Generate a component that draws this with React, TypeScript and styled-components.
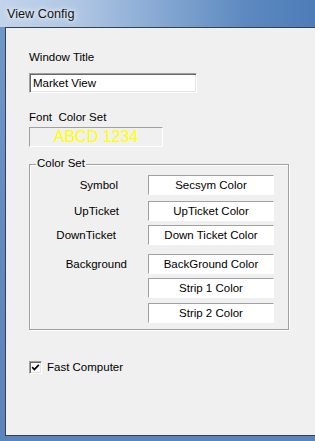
import React from 'react';
import styled, { createGlobalStyle } from 'styled-components';

const Global = createGlobalStyle`
  html, body { margin: 0; padding: 0; background: #6890c3; }
  body { font-family: "Liberation Sans", Arial, sans-serif; }
`;

const Frame = styled.div`
  width: 315px;
  height: 441px;
  box-sizing: border-box;
  display: flex;
  flex-direction: column;
  padding: 0 0 5px 5px;
  background: linear-gradient(180deg, #7199cb 0%, #5f89bf 60%, #5a84bb 100%);
  overflow: hidden;
`;

const TitleBar = styled.div`
  height: 27px;
  flex: none;
  margin-left: -5px;
  padding-left: 7px;
  display: flex;
  align-items: center;
  background: linear-gradient(90deg, #c2d4ea 0%, #afc6e3 25%, #87a9d3 50%, #5d89c0 78%, #4d7cb7 100%);
  font-size: 12.7px;
  color: #141414;
  text-shadow: 0 0 4px #fff, 0 0 8px rgba(255, 255, 255, 0.8);
`;

const Client = styled.div`
  flex: 1;
  background: #f0f0f0;
  border: 1px solid #34414f;
  border-right: none;
  display: flex;
  flex-direction: column;
  align-items: flex-start;
  padding: 22px 0 0 23px;
  font-size: 11.5px;
  color: #000;
`;

const Label = styled.div<{ $top: number }>`
  line-height: 14px;
  height: 14px;
  margin-top: ${(p) => p.$top}px;
  white-space: nowrap;
`;

const TextBox = styled.div`
  margin-top: 9px;
  width: 168px;
  height: 20px;
  box-sizing: border-box;
  background: #fff;
  border: 1px solid;
  border-color: #a0a0a0 #fff #fff #a0a0a0;
  box-shadow: inset 1px 1px 0 #696969, inset -1px -1px 0 #e3e3e3;
  padding-left: 3px;
  line-height: 18px;
  white-space: nowrap;
`;

const Preview = styled.div`
  margin-top: 3px;
  width: 134px;
  height: 20px;
  box-sizing: border-box;
  border: 1px solid;
  border-color: #a0a0a0 #fff #fff #a0a0a0;
  color: #ffff00;
  font-size: 16px;
  line-height: 18px;
  text-align: center;
  white-space: nowrap;
`;

const Group = styled.div`
  position: relative;
  margin-top: 17px;
  width: 260px;
  height: 166px;
  box-sizing: border-box;
  border: 1px solid #a0a0a0;
  box-shadow: inset 1px 1px 0 #fff, 1px 1px 0 #fff;
  display: flex;
  flex-direction: column;
  padding-top: 10px;
`;

const Legend = styled.div`
  position: absolute;
  top: -9px;
  left: 6px;
  padding: 0 1px;
  background: #f0f0f0;
  line-height: 14px;
  white-space: nowrap;
`;

const Row = styled.div<{ $gap: number }>`
  display: grid;
  grid-template-columns: 118px 126px;
  align-items: center;
  height: 20px;
  margin-top: ${(p) => p.$gap}px;
`;

const RowLabel = styled.div<{ $pad: number }>`
  text-align: right;
  padding-right: ${(p) => p.$pad}px;
  line-height: 14px;
  white-space: nowrap;
`;

const ColorButton = styled.div`
  height: 20px;
  box-sizing: border-box;
  background: #fff;
  border: 1px solid;
  border-color: #a0a0a0 #fff #fff #a0a0a0;
  text-align: center;
  line-height: 18px;
  white-space: nowrap;
`;

const CheckRow = styled.div`
  margin-top: 30px;
  display: flex;
  align-items: center;
  gap: 5px;
  line-height: 14px;
`;

const CheckBox = styled.div`
  width: 13px;
  height: 13px;
  box-sizing: border-box;
  background: #fff;
  border: 1px solid;
  border-color: #a0a0a0 #fff #fff #a0a0a0;
  box-shadow: inset 1px 1px 0 #696969, inset -1px -1px 0 #e3e3e3;
  display: flex;
  align-items: center;
  justify-content: center;
`;

const rows = [
  { label: 'Symbol', pad: 30, btn: 'Secsym Color', gap: 0 },
  { label: 'UpTicket', pad: 29, btn: 'UpTicket Color', gap: 6 },
  { label: 'DownTicket', pad: 32, btn: 'Down Ticket Color', gap: 4 },
  { label: 'Background', pad: 21, btn: 'BackGround Color', gap: 9 },
  { label: '', pad: 0, btn: 'Strip 1 Color', gap: 4 },
  { label: '', pad: 0, btn: 'Strip 2 Color', gap: 5 },
];

export default function App() {
  return (
    <>
      <Global />
      <Frame>
        <TitleBar>View Config</TitleBar>
        <Client>
          <Label $top={0}>Window Title</Label>
          <TextBox>Market View</TextBox>
          <Label $top={17}>Font&nbsp; Color Set</Label>
          <Preview>ABCD 1234</Preview>
          <Group>
            <Legend>Color Set</Legend>
            {rows.map((r) => (
              <Row key={r.btn} $gap={r.gap}>
                <RowLabel $pad={r.pad}>{r.label}</RowLabel>
                <ColorButton>{r.btn}</ColorButton>
              </Row>
            ))}
          </Group>
          <CheckRow>
            <CheckBox>
              <svg width="9" height="9" viewBox="0 0 9 9">
                <polyline points="1.2,4.2 3.4,6.5 7.8,1.8" fill="none" stroke="#000" strokeWidth="1.7" />
              </svg>
            </CheckBox>
            <span>Fast Computer</span>
          </CheckRow>
        </Client>
      </Frame>
    </>
  );
}
